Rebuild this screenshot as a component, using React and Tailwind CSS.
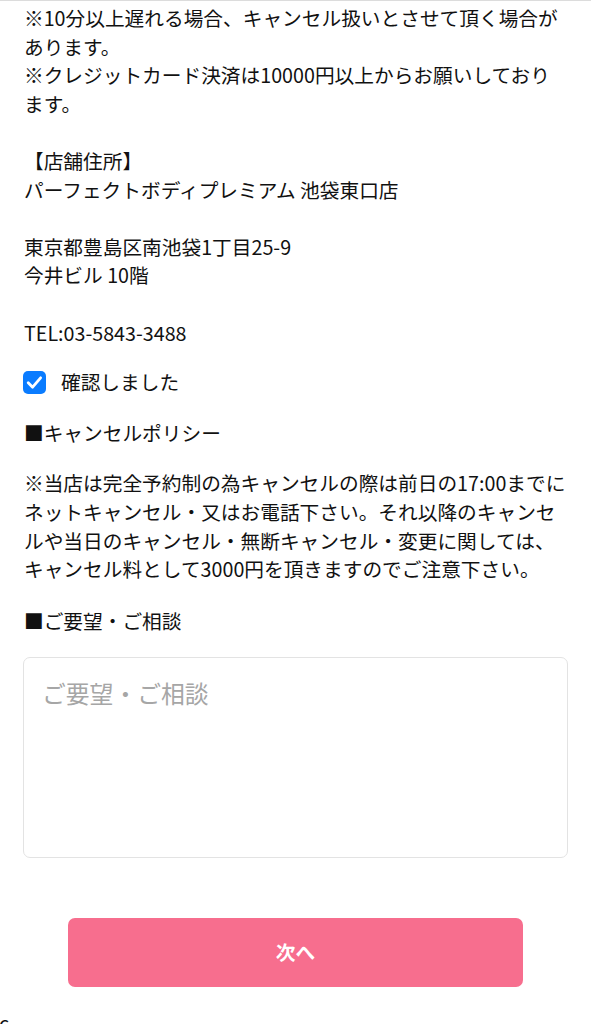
import React from "react";

const Line = ({ children }) => (
  <div className="whitespace-nowrap">{children}</div>
);

export default function App() {
  return (
    <div
      className="w-[591px] bg-white text-[#111] overflow-hidden"
      style={{ fontFamily: '"Noto Sans CJK JP", "Noto Sans", sans-serif' }}
    >
      <div className="h-px bg-[#dcdcdc]" />
      <div className="px-[24px] pt-[3px] text-[19.7px] leading-[28.6px]">
        <div>
          <Line>※10分以上遅れる場合、キャンセル扱いとさせて頂く場合が</Line>
          <Line>あります。</Line>
          <Line>※クレジットカード決済は10000円以上からお願いしており</Line>
          <Line>ます。</Line>
          <Line>&nbsp;</Line>
          <Line>【店舗住所】</Line>
          <Line>パーフェクトボディプレミアム 池袋東口店</Line>
          <Line>&nbsp;</Line>
          <Line>東京都豊島区南池袋1丁目25-9</Line>
          <Line>今井ビル 10階</Line>
          <Line>&nbsp;</Line>
          <Line>TEL:03-5843-3488</Line>
        </div>

        <label className="mt-[21px] flex items-center gap-[15px] h-[28.6px]">
          <span className="ml-[-1px] flex h-[23px] w-[23px] items-center justify-center rounded-[5px] bg-[#0a7cff]">
            <svg width="23" height="23" viewBox="0 0 23 23" fill="none">
              <path
                d="M5.2 11.8 L9.6 16.2 L17.6 6.8"
                stroke="white"
                strokeWidth="2.8"
                strokeLinecap="round"
                strokeLinejoin="round"
              />
            </svg>
          </span>
          <span>確認しました</span>
        </label>

        <div className="mt-[22px]">■キャンセルポリシー</div>

        <div className="mt-[22px]">
          <Line>※当店は完全予約制の為キャンセルの際は前日の17:00までに</Line>
          <Line>ネットキャンセル・又はお電話下さい。それ以降のキャンセ</Line>
          <Line>ルや当日のキャンセル・無断キャンセル・変更に関しては、</Line>
          <Line>キャンセル料として3000円を頂きますのでご注意下さい。</Line>
        </div>

        <div className="mt-[23px]">■ご要望・ご相談</div>

        <div className="mt-[22px] ml-[-1px] mr-[-1px] h-[201px] rounded-[7px] border border-[#e3e3e3] pl-[18px] pt-[17px]">
          <div className="text-[23.8px] leading-[36px] text-[#a6a6a6]">
            ご要望・ご相談
          </div>
        </div>

        <div className="mt-[60px] flex justify-center">
          <button className="flex h-[69px] w-[455px] items-center justify-center rounded-[7px] bg-[#f76e8e] text-[19.7px] font-bold text-white">
            次へ
          </button>
        </div>
      </div>
      <div className="mt-[22px] ml-[-1px] text-[19.7px] leading-[28.6px]">c</div>
    </div>
  );
}
